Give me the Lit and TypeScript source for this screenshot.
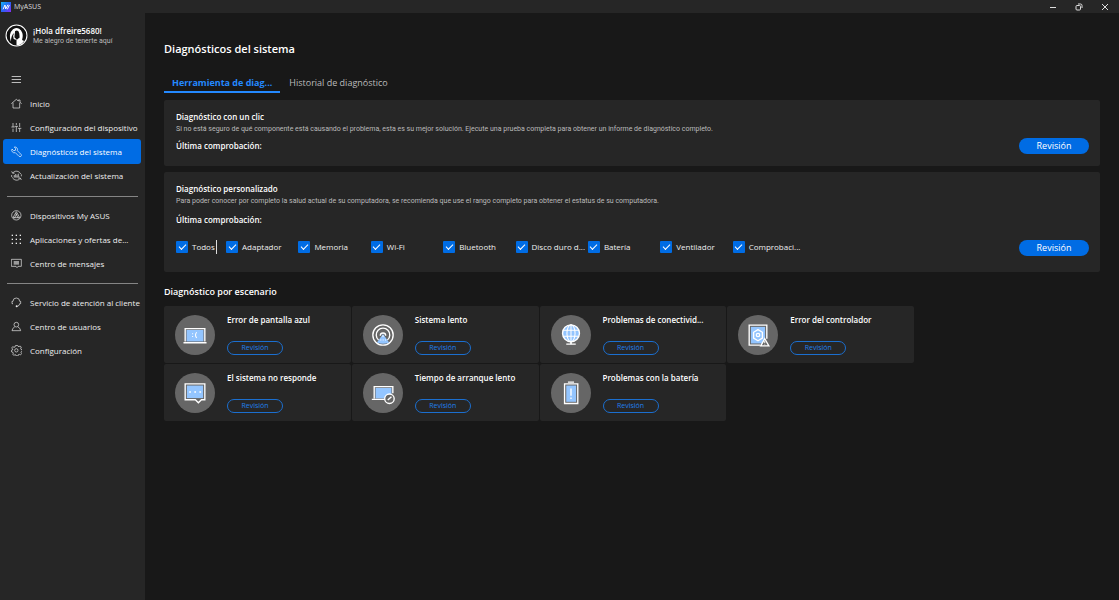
import { LitElement, html, svg, css, nothing } from "lit";
import { customElement, state } from "lit/decorators.js";
import { classMap } from "lit/directives/class-map.js";

const navIcons: Record<string, unknown> = {
  home: svg`<path d="M1 17 16 4l6 5V6h5v7l5 4M6 14v16h20V14"/>`,
  sliders: svg`<path d="M6 3v12M1 15h10M6 20v10M16 3v6M11 13h10M16 13v17M26 3v12M21 19h10M26 19v11"/>`,
  wrench: svg`<path d="M13 3a8 8 0 0 0-3 0l4 5-1 5-5 1-5-5a8 8 0 0 0 10 11l11 11a4 4 0 0 0 6-6L19 14A8 8 0 0 0 13 3zM25 26h1"/>`,
  update: svg`<path d="M5 9a14 14 0 0 1 24 3M28 25A14 14 0 0 1 4 22M2 4l3 6 6-1M31 30l-3-6-6 1M8 21h18M10 20v-5M14 20v-8M18 20v-6M22 20v-9M2 15v6M31 13v6"/>`,
  devices: svg`<circle cx="16" cy="16" r="14"/><path d="M16 5 6 23h20zM10 25 18 10M22 25 14 10"/>`,
  grid: svg`${[4, 16, 28].map((y) => [4, 16, 28].map((x) => svg`<rect class="solid" x=${x - 2} y=${y - 2} width="4" height="4"/>`))}`,
  message: svg`<path d="M1 4h30v21H21l-3 4-3-4H1z"/><path class="fill" d="M8 9h16v11H8z"/>`,
  support: svg`<path d="M6 20H3v-7h3a10 10 0 0 1 20 0h3v7h-3M26 20q0 6-7 8"/><circle class="solid" cx="17" cy="28" r="3"/>`,
  user: svg`<circle cx="16" cy="11" r="7"/><path d="M11 18Q4 21 3 29h26q-1-8-8-11"/>`,
  gear: svg`<path d="m13 2-1 4-3 1-4-2-3 4 3 3v3l-4 1 1 5 4 1 1 3-2 3 4 3 3-2 3 1 1 3h5l1-4 3-1 3 2 4-4-2-3 1-3 3-1V14l-4-1-1-3 2-4-4-3-3 2-3-1-1-3z"/><circle cx="16" cy="16" r="5"/>`,
};

const sceneIcons: Record<string, unknown> = {
  bluescreen: svg`<rect class="sky" x="34" y="44" width="50" height="34"/><path d="M30 78V40h58v38M25 82h68"/><path class="thin" d="M52 54v3M52 62v3M64 51q-7 8 0 17"/>`,
  slow: svg`<circle cx="59" cy="59" r="30"/><path d="M46 74a20 20 0 1 1 26 0M51 61a8 8 0 1 1 16 0"/><path class="sky" d="M59 56 77 81Q59 88 41 81z"/><path class="thin" d="M51 74h3M58 74h3M65 74h3M59 60v5"/>`,
  globe: svg`<circle class="sky line" cx="59" cy="54" r="25"/><path class="thin" d="M59 29v57M36 45h46M36 63h46"/><path d="M59 79v7M45 86h28"/><ellipse class="thin" cx="59" cy="54" rx="12" ry="25"/>`,
  driver: svg`<rect class="sky" x="38" y="35" width="42" height="49"/><path d="M66 89H33V30h52v40"/><path d="m59 43 13 8v17l-13 8-13-8V51z"/><circle cx="59" cy="59" r="5"/><path class="disc" d="M79 70 91 91H67z"/><path class="thin" d="M79 77v6M79 86v2"/>`,
  waiting: svg`<rect class="sky" x="35" y="37" width="48" height="37"/><path d="M30 32h58v47H78l-9 9-9-9H30z"/><path d="M42 56h5M57 56h5M72 56h5"/>`,
  boot: svg`<rect class="sky" x="37" y="44" width="47" height="31"/><path d="M33 75V40h55v20M26 78h40"/><circle class="disc" cx="78" cy="76" r="14"/><path d="M73 80 84 70"/>`,
  battery: svg`<rect class="sky" x="45" y="37" width="29" height="48"/><path d="M50 27h18M40 32h39v58H40z"/><path d="M59 46v21M59 72v5"/>`,
};

const navGroups = [
  [
    ["home", "Inicio"],
    ["sliders", "Configuración del dispositivo"],
    ["wrench", "Diagnósticos del sistema"],
    ["update", "Actualización del sistema"],
  ],
  [
    ["devices", "Dispositivos My ASUS"],
    ["grid", "Aplicaciones y ofertas de..."],
    ["message", "Centro de mensajes"],
  ],
  [
    ["support", "Servicio de atención al cliente"],
    ["user", "Centro de usuarios"],
    ["gear", "Configuración"],
  ],
];

const components = ["Adaptador", "Memoria", "Wi-Fi", "Bluetooth", "Disco duro d...", "Batería", "Ventilador", "Comprobaci..."];

const scenarios = [
  ["bluescreen", "Error de pantalla azul"],
  ["slow", "Sistema lento"],
  ["globe", "Problemas de conectivid..."],
  ["driver", "Error del controlador"],
  ["waiting", "El sistema no responde"],
  ["boot", "Tiempo de arranque lento"],
  ["battery", "Problemas con la batería"],
];

@customElement("app-root")
export class AppRoot extends LitElement {
  @state() private current = "Diagnósticos del sistema";
  @state() private selected = new Set(components);

  static styles = css`
    :host {
      display: flex;
      flex-direction: column;
      min-height: 100vh;
      background: #181818;
      color: #fff;
      font-family: "Open Sans", "Noto Sans", sans-serif;
      font-size: 8px;
      line-height: 12px;
    }
    * { box-sizing: border-box; }
    h1, h2, h3, p, ul { margin: 0; padding: 0; }
    ul { list-style: none; }
    h2, h3 { font-size: 8px; font-weight: 600; }
    button, input { font: inherit; margin: 0; }
    button { cursor: pointer; padding: 0; border: 0; background: none; color: inherit; }
    svg { display: block; fill: none; stroke: currentColor; }

    .titlebar { display: flex; align-items: center; height: 13px; padding: 0 8px 0 1px; background: #262626; }
    .logo { width: 10px; height: 10px; }
    .app-name { flex: 1; margin-left: 3px; font-size: 7px; color: #ddd; }
    .window-buttons { display: flex; gap: 14px; }
    .window-buttons button { width: 12px; height: 12px; display: grid; place-items: center; color: #ddd; }
    .window-buttons svg { width: 8px; height: 8px; }

    .shell { flex: 1; display: flex; }
    .sidebar { width: 145px; flex: none; background: #262626; padding: 11px 4px 0 3px; }
    .profile { display: flex; align-items: center; gap: 5px; padding-left: 2px; line-height: 11px; }
    .avatar { width: 23px; height: 23px; }
    .profile strong { display: block; font-weight: 600; }
    .profile span { display: block; font-family: Roboto, sans-serif; font-size: 7px; color: #bbb; }
    .menu-toggle { display: block; margin: 26px 0 5px 8px; width: 11px; height: 13px; color: #bbb; }
    .menu-toggle svg { width: 11px; height: 11px; stroke-width: 3; }
    .group { padding-bottom: 9px; }
    .group + .group { border-top: 1px solid #858585; margin: 0 3px 0 4px; padding: 6px 0 8px; }
    .group + .group .nav-link { margin: 0 -3px 0 -4px; }
    .group li { height: 24px; }
    .nav-link {
      display: flex; align-items: center; gap: 8px; height: 25px; padding-left: 8px;
      color: #eee; text-decoration: none; border-radius: 3px; white-space: nowrap;
    }
    .nav-link.active { background: #006ce4; color: #fff; }
    .nav-link svg { width: 11px; height: 11px; flex: none; stroke-width: 2; }
    .solid { fill: currentColor; stroke: none; }
    .fill { fill: #999; stroke: none; }

    main { flex: 1; min-width: 0; padding: 28px 19px 0; }
    h1 { font-size: 11px; font-weight: 600; line-height: 16px; }
    .tabs { display: flex; gap: 9px; margin-top: 18px; font-size: 9px; line-height: 16px; }
    .tab { color: #bbb; border-bottom: 2px solid transparent; }
    .tab.active { padding: 0 8px; color: #2489ff; font-weight: 700; border-color: #2489ff; }
    .card { display: flex; align-items: flex-end; justify-content: space-between; background: #262626; border-radius: 2px; padding: 11px 11px 12px 12px; margin-top: 6px; }
    .tabs + .card { margin-top: 7px; }
    .card p { font-family: Roboto, sans-serif; font-size: 7px; color: #bbb; }
    .card .last { font: 600 8px/12px "Open Sans", sans-serif; color: #fff; margin-top: 5px; }
    .custom { padding-bottom: 16px; }
    .custom .last { margin-top: 7px; }
    .primary { width: 70px; height: 16px; border-radius: 8px; background: #006ce4; font-size: 9px; line-height: 16px; flex: none; }
    .body { flex: 1; min-width: 0; padding-bottom: 2px; }
    .checks { display: flex; margin-top: 14px; }
    .checks label { display: flex; align-items: center; gap: 4px; white-space: nowrap; color: #eee; }
    .all { width: 41px; height: 14px; border-right: 1px solid #ddd; }
    .parts { flex: 1; max-width: 579px; margin-left: 9px; display: grid; grid-template-columns: repeat(8, minmax(0, 1fr)); }
    input { appearance: none; width: 12px; height: 12px; flex: none; display: grid; place-items: center; background: #333; border-radius: 1px; }
    input:checked { background: #006ce4; }
    input:checked::before { content: ""; width: 6px; height: 3px; border: solid #fff; border-width: 0 0 1px 1px; transform: translateY(-1px) rotate(-45deg); }

    .section-title { font-size: 9px; margin-top: 14px; }
    .scenarios { display: grid; grid-template-columns: repeat(4, minmax(0, 1fr)); gap: 1px; max-width: 750px; margin-top: 8px; }
    .scene { display: flex; align-items: center; gap: 12px; height: 57px; padding-left: 11px; background: #262626; border-radius: 2px; }
    .badge { width: 40px; height: 40px; border-radius: 50%; background: #666; flex: none; }
    .badge svg { width: 40px; height: 40px; stroke: #fff; stroke-width: 4; }
    .sky { fill: #93c5ff; stroke: none; }
    .sky.line { stroke: #fff; }
    .thin { stroke-width: 3; }
    .disc { fill: #666; }
    .scene h3 { white-space: nowrap; margin-bottom: 15px; }
    .outline { display: block; width: 56px; height: 14px; border: 1px solid #1b6fd0; border-radius: 7px; color: #2080ec; font-size: 7px; line-height: 12px; }
  `;

  private toggle(name: string) {
    const next = new Set(this.selected);
    next.has(name) ? next.delete(name) : next.add(name);
    this.selected = next;
  }

  private toggleAll() {
    this.selected = new Set(this.selected.size === components.length ? [] : components);
  }

  private navigate(e: Event, label: string) {
    e.preventDefault();
    this.current = label;
  }

  private renderNav() {
    return navGroups.map(
      (group) => html`<ul class="group">
        ${group.map(([icon, label]) => html`<li>
          <a href="#" class=${classMap({ "nav-link": true, active: label === this.current })}
            aria-current=${label === this.current ? "page" : nothing}
            @click=${(e: Event) => this.navigate(e, label)}>
            <svg viewBox="0 0 33 33" aria-hidden="true">${navIcons[icon]}</svg>${label}</a>
        </li>`)}
      </ul>`
    );
  }

  render() {
    return html`
      <header class="titlebar">
        <svg class="logo" viewBox="0 0 30 30" aria-hidden="true">
          <defs><linearGradient id="g" x1="0" y1="0" x2="1" y2="1"><stop offset="0" stop-color="#19b5f5"/><stop offset=".5" stop-color="#2563f5"/><stop offset="1" stop-color="#8a2df5"/></linearGradient></defs>
          <rect width="30" height="30" fill="url(#g)" stroke="none"/>
          <path d="m6 22 6-13 2 12 7-13M19 22l6-13" stroke="#fff" stroke-width="3"/>
        </svg>
        <span class="app-name">MyASUS</span>
        <div class="window-buttons">
          <button aria-label="Minimizar"><svg viewBox="0 0 8 8"><path d="M1 4.500h6"/></svg></button>
          <button aria-label="Restaurar"><svg viewBox="0 0 8 8"><rect x="1" y="2.5" width="4.5" height="4.5" rx="1"/><path d="M3 1h2.500q1.500 0 1.500 1.500V5"/></svg></button>
          <button aria-label="Cerrar"><svg viewBox="0 0 8 8"><path d="m1 1 6 6M7 1 1 7"/></svg></button>
        </div>
      </header>
      <div class="shell">
        <nav class="sidebar">
          <div class="profile">
            <svg class="avatar" viewBox="0 0 66 66" aria-hidden="true">
              <circle cx="33" cy="33" r="30" fill="#111" stroke="#fff" stroke-width="3"/>
              <path d="M17 51Q9 28 23 15q15-9 23 4 8 12 3 27l6 3Q46 62 33 61V46l-8-3q-4-8 1-17-9 8-9 25z" fill="#fff" stroke="none"/>
              <path d="M29 20q10-5 12 7l1 12-8 6-7-7z" fill="#111" stroke="none"/>
            </svg>
            <div><strong>¡Hola dfreire5680!</strong><span>Me alegro de tenerte aquí</span></div>
          </div>
          <button class="menu-toggle" aria-label="Menú"><svg viewBox="0 0 33 33"><path d="M2 7.500h28M2 16.500h28M2 25.500h28"/></svg></button>
          ${this.renderNav()}
        </nav>
        <main>
          <h1>Diagnósticos del sistema</h1>
          <div class="tabs" role="tablist">
            <button class="tab active" role="tab" aria-selected="true">Herramienta de diag...</button>
            <button class="tab" role="tab" aria-selected="false">Historial de diagnóstico</button>
          </div>
          <section class="card">
            <div class="body">
              <h2>Diagnóstico con un clic</h2>
              <p>Si no está seguro de qué componente está causando el problema, esta es su mejor solución. Ejecute una prueba completa para obtener un informe de diagnóstico completo.</p>
              <p class="last">Última comprobación:</p>
            </div>
            <button class="primary">Revisión</button>
          </section>
          <section class="card custom">
            <div class="body">
              <h2>Diagnóstico personalizado</h2>
              <p>Para poder conocer por completo la salud actual de su computadora, se recomienda que use el rango completo para obtener el estatus de su computadora.</p>
              <p class="last">Última comprobación:</p>
              <div class="checks">
                <label class="all"><input type="checkbox" .checked=${this.selected.size === components.length} @change=${this.toggleAll} />Todos</label>
                <div class="parts">
                  ${components.map((c) => html`<label><input type="checkbox" .checked=${this.selected.has(c)} @change=${() => this.toggle(c)} />${c}</label>`)}
                </div>
              </div>
            </div>
            <button class="primary">Revisión</button>
          </section>
          <h2 class="section-title">Diagnóstico por escenario</h2>
          <div class="scenarios">
            ${scenarios.map(([icon, name]) => html`<article class="scene">
              <div class="badge"><svg viewBox="0 0 118 118" aria-hidden="true">${sceneIcons[icon]}</svg></div>
              <div><h3>${name}</h3><button class="outline">Revisión</button></div>
            </article>`)}
          </div>
        </main>
      </div>
    `;
  }
}
